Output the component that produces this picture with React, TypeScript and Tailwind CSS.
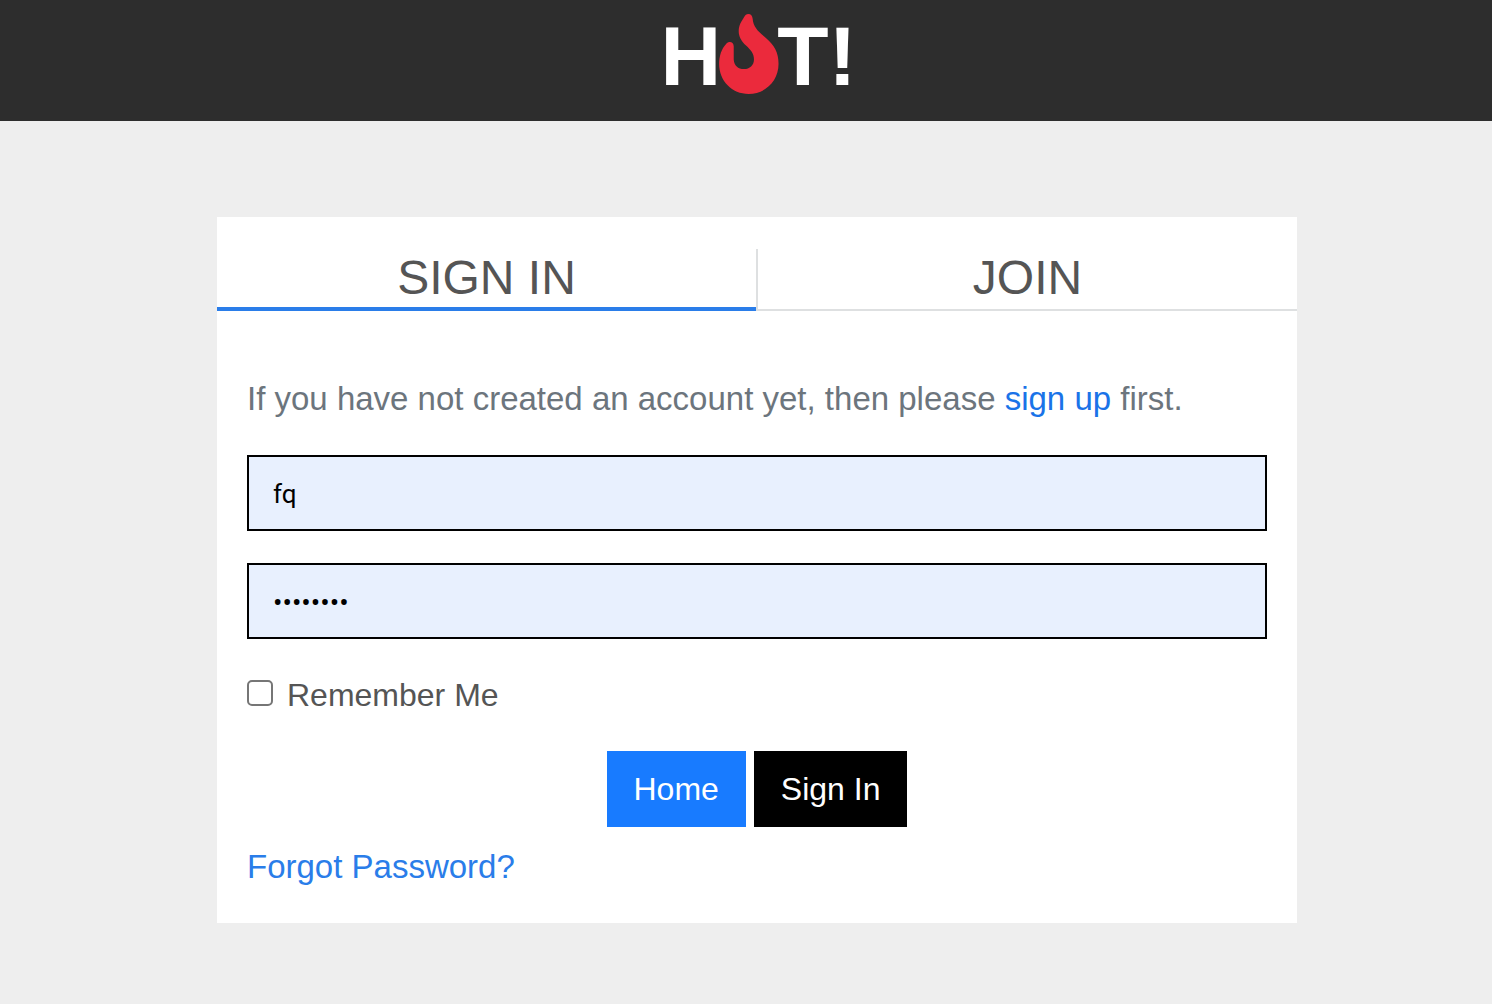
import { useState } from "react";

function Flame() {
  return (
    <svg viewBox="209 41 180 241" className="-mx-0.5 h-20 w-[60px]" role="img" aria-label="O">
      <path
        fill="#eb2a3c"
        d="M297 41C305 41 309 46 310 55C312 80 327 94 350 113C375 134 388 157 388 191C388 243 348 282 298 282C248 282 209 243 209 191C209 167 216 146 230 131C238 122 252 123 253 138L253 178C254 196 266 207 284 207C301 207 314 195 314 178C314 160 304 149 290 136C276 123 268 109 268 93C268 75 277 62 284 51C288 44 291 41 297 41Z"
      />
    </svg>
  );
}

const fieldClass =
  "block h-[76px] w-full border-2 border-black bg-[#e8f0fe] px-6 pt-0.5 font-[Roboto,sans-serif] text-black outline-none";

export default function App() {
  const [user, setUser] = useState("fq");
  const [password, setPassword] = useState("password");
  const [remember, setRemember] = useState(false);

  return (
    <div className="min-h-screen bg-[#eeeeee] font-['Liberation_Sans',Arial,sans-serif] text-[32px] leading-[48px] text-[#555555]">
      <header className="flex items-start justify-center bg-[#2d2d2d] pt-3.5 pb-[23px] pl-[25px] text-[84px] leading-none font-bold text-white">
        <span>H</span>
        <Flame />
        <span>T!</span>
      </header>

      <main className="pt-24 pb-20 pl-[22px]">
        <section className="mx-auto max-w-[1080px] bg-white py-8">
          <nav className="flex text-5xl leading-[58px]">
            <button type="button" className="flex-1 border-b-4 border-[#2a7de9]">
              SIGN IN
            </button>
            <button type="button" className="flex-1 border-b-2 border-l-2 border-[#dee0e1] pb-0.5">
              JOIN
            </button>
          </nav>

          <form className="px-[30px] pt-16" onSubmit={(e) => e.preventDefault()}>
            <p className="text-[33px] text-[#6c757d]">
              If you have not created an account yet, then please{" "}
              <a href="#join" className="text-[#1a73e8]">
                sign up
              </a>{" "}
              first.
            </p>
            <div className="mt-8 flex flex-col gap-8">
              <input
                type="text"
                aria-label="Username"
                value={user}
                onChange={(e) => setUser(e.target.value)}
                className={`${fieldClass} text-[26px]`}
              />
              <input
                type="password"
                aria-label="Password"
                value={password}
                onChange={(e) => setPassword(e.target.value)}
                className={`${fieldClass} text-[28px]`}
              />
              <label className="flex items-start gap-3.5">
                <input
                  type="checkbox"
                  checked={remember}
                  onChange={(e) => setRemember(e.target.checked)}
                  className="mt-[9px] size-[26px] appearance-none rounded-[5px] border-2 border-[#767676] bg-white checked:bg-[#187bff]"
                />
                Remember Me
              </label>
              <div className="flex justify-center gap-2 text-white">
                <button type="button" className="h-[76px] bg-[#187bff] px-[27px]">
                  Home
                </button>
                <button type="submit" className="h-[76px] bg-black px-[27px]">
                  Sign In
                </button>
              </div>
            </div>
            <a href="#forgot" className="mt-4 inline-block align-top text-[33px] text-[#2a7de9]">
              Forgot Password?
            </a>
          </form>
        </section>
      </main>
    </div>
  );
}
